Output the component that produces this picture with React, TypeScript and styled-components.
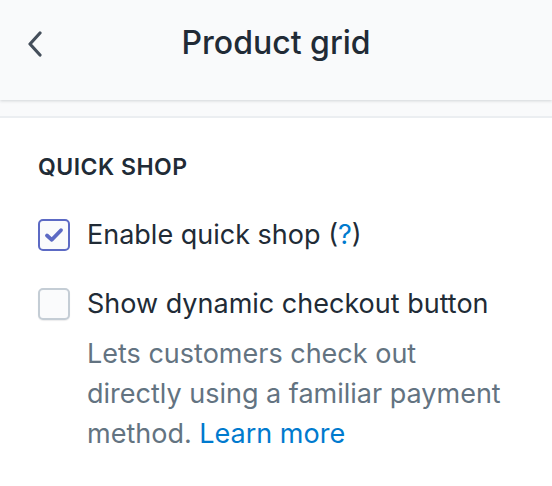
import styled, { createGlobalStyle } from 'styled-components'

const Global = createGlobalStyle`
  body {
    margin: 0;
    background: #ffffff;
    font-family: Inter, "Noto Sans", sans-serif;
    color: #212b36;
  }
`

const Page = styled.div`
  width: 552px;
  height: 486px;
  overflow: hidden;
  background: #fff;
`

const Header = styled.div`
  height: 100px;
  background: #f9fafb;
  display: grid;
  grid-template-columns: 80px 1fr 80px;
  align-items: center;
  box-shadow: 0 1px 3px rgba(33, 43, 54, 0.18);
  position: relative;
  z-index: 1;
`

const BackButton = styled.button`
  border: 0;
  background: none;
  padding: 0 0 0 26px;
  display: flex;
  align-items: center;
  color: #454f5b;
  height: 40px;
  margin-top: -12px;
`

const Title = styled.h1`
  margin: -15px 0 0;
  text-align: center;
  font-size: 32px;
  line-height: 40px;
  font-weight: 500;
  color: #212b36;
`

const Strip = styled.div`
  height: 16px;
  background: #f9fafb;
  border-bottom: 2px solid #ebeef1;
`

const Section = styled.section`
  padding: 34px 38px 0;
`

const Heading = styled.h2`
  margin: 0 0 33px;
  font-size: 23px;
  line-height: 30px;
  font-weight: 600;
  letter-spacing: 0.5px;
  text-transform: uppercase;
  color: #212b36;
`

const Option = styled.label`
  display: grid;
  grid-template-columns: 32px 1fr;
  column-gap: 17px;
  align-items: start;
  margin-bottom: 29px;
`

const Box = styled.span<{ $checked?: boolean }>`
  width: 32px;
  height: 32px;
  box-sizing: border-box;
  border-radius: 5px;
  margin-top: 4px;
  background: #fafbfc;
  border: 2px solid ${p => (p.$checked ? '#5c6ac4' : '#c4cdd5')};
  box-shadow: ${p => (p.$checked ? 'none' : '0 1px 1px rgba(22,29,37,0.08)')};
  display: flex;
  align-items: center;
  justify-content: center;
`

const Label = styled.span`
  display: block;
  font-size: 27px;
  line-height: 40px;
  color: #212b36;
`

const Help = styled.p`
  margin: 10px 0 0;
  max-width: 420px;
  font-size: 27px;
  line-height: 40px;
  color: #637381;
`

const Link = styled.a`
  color: #007ace;
  text-decoration: none;
`

export default function App() {
  return (
    <Page>
      <Global />
      <Header>
        <BackButton aria-label="Back">
          <svg width="18" height="26" viewBox="0 0 18 26" fill="none">
            <path d="M14 2 L4 13 L14 24" stroke="#454f5b" strokeWidth="3.2" strokeLinecap="round" strokeLinejoin="round" />
          </svg>
        </BackButton>
        <Title>Product grid</Title>
        <span />
      </Header>
      <Strip />
      <Section>
        <Heading>Quick shop</Heading>
        <Option>
          <Box $checked>
            <svg width="20" height="16" viewBox="0 0 20 16" fill="none">
              <path d="M3 8.5 L7.8 12.8 L17 3.2" stroke="#5c6ac4" strokeWidth="3.8" strokeLinecap="round" strokeLinejoin="round" />
            </svg>
          </Box>
          <Label>
            Enable quick shop (<Link href="#">?</Link>)
          </Label>
        </Option>
        <Option>
          <Box />
          <div>
            <Label>Show dynamic checkout button</Label>
            <Help>
              Lets customers check out directly using a familiar payment method.{' '}
              <Link href="#">Learn more</Link>
            </Help>
          </div>
        </Option>
      </Section>
    </Page>
  )
}
